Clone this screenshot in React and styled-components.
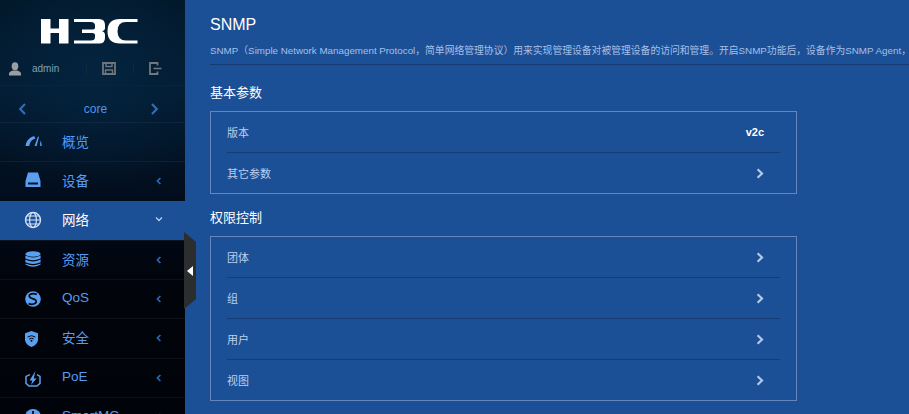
import React from "react";
import styled, { createGlobalStyle } from "styled-components";

const Global = createGlobalStyle`
  html, body { margin: 0; padding: 0; height: 100%; overflow: hidden; }
  body { font-family: "Liberation Sans", "Noto Sans CJK SC", sans-serif; background: #1b4f96; }
  * { box-sizing: border-box; }
`;

const Page = styled.div`
  display: flex;
  height: 414px;
  overflow: hidden;
  position: relative;
`;

// Sidebar
const Sidebar = styled.aside`
  width: 185px;
  flex: none;
  overflow: hidden;
  background: radial-gradient(ellipse 150px 120px at 95px 70px, #04243f 0%, rgba(4, 36, 63, 0) 100%),
    linear-gradient(180deg, #021627 0%, #021a30 90px, #020d1c 200px, #01040c 280px, #01030a 100%);
`;

const Logo = styled.div`
  height: 53px;
  display: flex;
  padding: 19px 0 0 41px;
`;

const UserBar = styled.div`
  height: 33px;
  display: flex;
  align-items: center;
  padding: 0 0 1px 8px;
  border-bottom: 1px solid #0c2438;
`;

const UserName = styled.span`
  font-size: 10px;
  color: #7da3b8;
  margin-left: 10px;
  width: 54px;
`;

const BarSep = styled.i`
  width: 1px;
  height: 11px;
  background: #12293c;
`;

const BarIcon = styled.span`
  display: flex;
  margin-left: ${(p) => p.$gap}px;
  margin-right: ${(p) => p.$after}px;
`;

const DeviceBar = styled.div`
  height: 36px;
  display: flex;
  align-items: center;
  justify-content: space-between;
  padding: 10px 26px 0 18px;
  font-size: 12px;
  color: #4f94ea;
`;

const DeviceName = styled.span`
  margin-left: 14px;
`;

const MenuRow = styled.div`
  height: 39.3px;
  display: flex;
  align-items: center;
  position: relative;
  padding: 0 0 3px 62px;
  font-size: 13.5px;
  color: ${(p) => (p.$active ? "#ffffff" : "#559cf2")};
  background: ${(p) => (p.$active ? "#1b4f96" : "transparent")};
  border-top: 1px solid ${(p) => (p.$active ? "#1b4f96" : "rgba(255, 255, 255, 0.05)")};
`;

const MenuIcon = styled.span`
  position: absolute;
  left: 23px;
  top: 8px;
  width: 20px;
  height: 20px;
  display: flex;
  color: ${(p) => (p.$active ? "#d4e3f7" : "#5b9ff0")};
`;

const MenuArrow = styled.span`
  position: absolute;
  left: 155px;
  top: ${(p) => (p.$active ? 13 : 15)}px;
  display: flex;
  color: ${(p) => (p.$active ? "#b9cdea" : "#2a6db8")};
`;

const Handle = styled.div`
  position: absolute;
  left: 184px;
  top: 232px;
  width: 12px;
  height: 77px;
  background: #2b2d2f;
  clip-path: polygon(0 0, 100% 10px, 100% calc(100% - 10px), 0 100%);
  display: flex;
  align-items: center;
  padding-left: 3px;
`;

const HandleTip = styled.i`
  width: 0;
  height: 0;
  border-top: 5px solid transparent;
  border-bottom: 5px solid transparent;
  border-right: 6px solid #ffffff;
`;

// Main area
const Main = styled.main`
  flex: 1;
  min-width: 0;
  overflow: hidden;
  padding: 16px 0 0 25px;
  background: #1b4f96;
`;

const Title = styled.h1`
  margin: 0;
  font-size: 16px;
  line-height: 18px;
  font-weight: 400;
  color: #ffffff;
`;

const Description = styled.p`
  margin: 9px 0 0;
  height: 22px;
  line-height: 15px;
  font-size: 9.8px;
  white-space: nowrap;
  color: #a6c0e8;
  border-bottom: 1px solid #163c72;
`;

const SectionTitle = styled.h2`
  margin: 0;
  font-size: 13px;
  font-weight: 400;
  line-height: 16px;
  color: #ffffff;
  padding-top: ${(p) => p.$top}px;
  padding-bottom: 10px;
`;

const Panel = styled.section`
  width: 587px;
  border: 1px solid #6486ba;
  padding: 0 16px;
`;

const Row = styled.div`
  height: 41px;
  display: flex;
  align-items: center;
  justify-content: space-between;
  font-size: 11px;
  color: #bcd0ee;
  padding-right: 16px;
  &:first-child { height: 40px; }
  & + & { border-top: 1px solid #163c72; }
`;

const RowValue = styled.span`
  font-size: 11px;
  font-weight: 700;
  color: #ffffff;
`;

const Chevron = () => (
  <svg width="8" height="11" viewBox="0 0 8 11">
    <path d="M1.6 1.2 L6 5.5 L1.6 9.8" fill="none" stroke="#b4c9ea" strokeWidth="2.2" />
  </svg>
);

const Small = ({ dir }) => (
  <svg width="8" height="8" viewBox="0 0 8 8">
    {dir === "down" ? (
      <path d="M1 2.4 L4 5.4 L7 2.4" fill="none" stroke="currentColor" strokeWidth="1.4" />
    ) : (
      <path d="M5.4 1 L2.4 4 L5.4 7" fill="none" stroke="currentColor" strokeWidth="1.6" />
    )}
  </svg>
);

const LogoMark = () => (
  <svg width="97" height="25" viewBox="0 0 97 25" fill="#ffffff">
    <path d="M0 0 H9.5 V9.5 H18 V0 H27.5 V24.5 H18 V14 H9.5 V24.5 H0 Z" />
    <path d="M33 0 H58 Q64 0 64 6 V9 Q64 11.5 61 12.2 Q64 13 64 16 V19 Q64 24.5 58 24.5 H33 V21.5 H50 Q54 21.5 54 18 V16 Q54 14 51 14 H41 V10.5 H51 Q54 10.5 54 8.5 V6.5 Q54 3 50 3 H33 Z" />
    <path d="M96.5 0 H79 Q66.5 0 66.5 12.2 Q66.5 24.5 79 24.5 H96.5 V21.5 H85 Q76.5 21.5 76.5 12.2 Q76.5 3 85 3 H96.5 Z" />
  </svg>
);

const UserIcon = () => (
  <svg width="14" height="14" viewBox="0 0 14 14" fill="#9a9fa3">
    <ellipse cx="7" cy="4.2" rx="3.3" ry="4" />
    <path d="M1 13.5 V11.5 Q1 9.6 4.6 8.4 H9.4 Q13 9.6 13 11.5 V13.5 Z" />
  </svg>
);

const SaveIcon = () => (
  <svg width="14" height="13" viewBox="0 0 14 13" fill="none" stroke="#6f757a" strokeWidth="1.8">
    <path d="M1 1 H13 V12 H1 Z" />
    <path d="M4 1 V4.5 H10 V1 M3.5 12 V8 H10.5 V12" strokeWidth="1.4" />
  </svg>
);

const LogoutIcon = () => (
  <svg width="13" height="13" viewBox="0 0 13 13" fill="none" stroke="#72787d" strokeWidth="1.8">
    <path d="M8.5 3.5 V1 H1 V12 H8.5 V9.5" />
    <path d="M4.5 6.5 H12.5" strokeWidth="1.5" />
  </svg>
);

const NavChevron = ({ left }) => (
  <svg width="9" height="12" viewBox="0 0 9 12">
    <path
      d={left ? "M7 1 L2.2 6 L7 11" : "M2 1 L6.8 6 L2 11"}
      fill="none"
      stroke="#2f6db5"
      strokeWidth="2.2"
    />
  </svg>
);

const icons = {
  gauge: (
    <svg width="20" height="20" viewBox="0 0 20 20" fill="currentColor">
      <path d="M2.5 15 Q3.5 7.5 11 5 L12.5 7.6 Q7 9 6.2 15 Z" />
      <path d="M11.5 15 L15 5.6 L16 6 L13.6 15 Z" />
      <path d="M17.2 9.6 Q18.6 11.6 18.8 15 H17.2 Z" />
    </svg>
  ),
  drive: (
    <svg width="20" height="20" viewBox="0 0 20 20" fill="currentColor">
      <path d="M5 2.5 H15 L17.5 11 V17 H2.5 V11 Z" />
      <rect x="5" y="12.5" width="10" height="2" fill="#021627" />
    </svg>
  ),
  globe: (
    <svg width="20" height="20" viewBox="0 0 20 20" fill="none" stroke="currentColor" strokeWidth="1.2">
      <circle cx="10" cy="10" r="7.5" strokeWidth="1.4" />
      <ellipse cx="10" cy="10" rx="3.4" ry="7.5" />
      <path d="M2.5 10 H17.5 M3.6 6 H16.4 M3.6 14 H16.4" />
    </svg>
  ),
  stack: (
    <svg width="20" height="20" viewBox="0 0 20 20" fill="currentColor">
      <ellipse cx="10" cy="5" rx="7.6" ry="2.8" />
      <path d="M2.4 6.6 Q10 10.6 17.6 6.6 V9.4 Q10 13 2.4 9.4 Z" />
      <path d="M2.4 10.6 Q10 14.4 17.6 10.6 V13.2 Q10 16.6 2.4 13.2 Z" />
      <path d="M2.4 14.4 Q10 18 17.6 14.4 V15.6 Q10 20 2.4 15.6 Z" />
    </svg>
  ),
  qos: (
    <svg width="20" height="20" viewBox="0 0 20 20">
      <g transform="translate(0 2)">
        <circle cx="10" cy="9" r="7.8" fill="currentColor" />
        <path d="M13.8 4.4 Q10 2.8 7 4.4 Q5 6.4 8 8 L12 9.6 Q14.6 11.6 12 13.6 Q9 15 5.6 13.6" fill="none" stroke="#020915" strokeWidth="1.7" />
      </g>
    </svg>
  ),
  shield: (
    <svg width="20" height="20" viewBox="0 0 20 20">
      <g transform="translate(0 2)">
        <path d="M8.5 2 L15 4.2 V11 Q14.5 15.6 8.5 18 Q2.5 15.6 2 11 V4.2 Z" fill="currentColor" />
        <path d="M4.6 8 Q8.5 5.4 12.4 8 M6.2 10 Q8.5 8.4 10.8 10" fill="none" stroke="#020915" strokeWidth="1" />
        <circle cx="8.5" cy="11.8" r="1" fill="#020915" />
      </g>
    </svg>
  ),
  poe: (
    <svg width="20" height="20" viewBox="0 0 20 20">
      <g transform="translate(0 3)">
        <path d="M7 4.6 L3 6.4 V13.4 L6 16 H14 L17 13.4 V6.4 L14 4.6" fill="none" stroke="currentColor" strokeWidth="1.5" />
        <path d="M12.4 1 L6.6 10.6 H9.4 L8 15 L13.6 8.4 H10.8 Z" fill="currentColor" />
      </g>
    </svg>
  ),
  smart: (
    <svg width="20" height="20" viewBox="0 0 20 20">
      <g transform="translate(0 1)">
        <circle cx="10" cy="10" r="8" fill="currentColor" />
        <path d="M10 4 V10" stroke="#020915" strokeWidth="1.8" />
      </g>
    </svg>
  ),
};

const menu = [
  { label: "概览", icon: "gauge" },
  { label: "设备", icon: "drive", arrow: "left" },
  { label: "网络", icon: "globe", arrow: "down", active: true },
  { label: "资源", icon: "stack", arrow: "left" },
  { label: "QoS", icon: "qos", arrow: "left" },
  { label: "安全", icon: "shield", arrow: "left" },
  { label: "PoE", icon: "poe", arrow: "left" },
  { label: "SmartMC", icon: "smart", arrow: "left" },
];

const App = () => (
  <Page>
    <Global />
    <Sidebar>
      <Logo>
        <LogoMark />
      </Logo>
      <UserBar>
        <UserIcon />
        <UserName>admin</UserName>
        <BarSep />
        <BarIcon $gap={15} $after={17}>
          <SaveIcon />
        </BarIcon>
        <BarSep />
        <BarIcon $gap={15} $after={0}>
          <LogoutIcon />
        </BarIcon>
      </UserBar>
      <DeviceBar>
        <NavChevron left />
        <DeviceName>core</DeviceName>
        <NavChevron />
      </DeviceBar>
      {menu.map((item) => (
        <MenuRow key={item.label} $active={item.active}>
          <MenuIcon $active={item.active}>{icons[item.icon]}</MenuIcon>
          {item.label}
          {item.arrow && (
            <MenuArrow $active={item.active}>
              <Small dir={item.arrow} />
            </MenuArrow>
          )}
        </MenuRow>
      ))}
    </Sidebar>
    <Handle>
      <HandleTip />
    </Handle>
    <Main>
      <Title>SNMP</Title>
      <Description>
        SNMP（Simple Network Management Protocol，简单网络管理协议）用来实现管理设备对被管理设备的访问和管理。开启SNMP功能后，设备作为SNMP Agent，可接收并处理来自NMS的请求
      </Description>
      <SectionTitle $top={20}>基本参数</SectionTitle>
      <Panel>
        <Row>
          版本
          <RowValue>v2c</RowValue>
        </Row>
        <Row>
          其它参数
          <Chevron />
        </Row>
      </Panel>
      <SectionTitle $top={16}>权限控制</SectionTitle>
      <Panel>
        {["团体", "组", "用户", "视图"].map((name) => (
          <Row key={name}>
            {name}
            <Chevron />
          </Row>
        ))}
      </Panel>
    </Main>
  </Page>
);

export default App;
